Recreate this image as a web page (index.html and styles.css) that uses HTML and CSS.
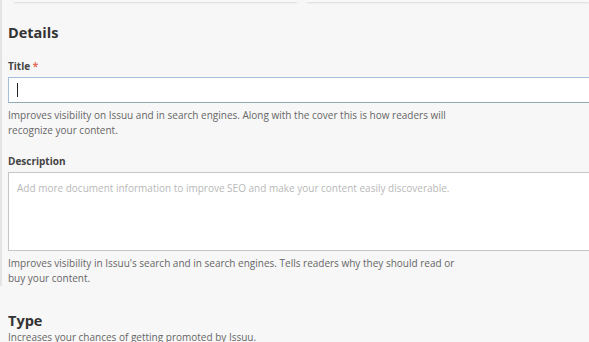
FILE: index.html
```html
<!DOCTYPE html>
<html lang="en">
<head>
  <meta charset="UTF-8">
  <meta name="viewport" content="width=device-width, initial-scale=1.0">
  <title>Details</title>
  <link rel="stylesheet" href="styles.css">
</head>
<body>
  <div class="page">
    <div class="rail"></div>

    <div class="content">
      <!-- Cards above, cut off by the viewport -->
      <div class="cards">
        <div class="card"></div>
        <div class="card"></div>
      </div>

      <!-- Details Section -->
      <section class="details">
        <h2>Details</h2>

        <div class="field">
          <label for="title">Title <span class="required">*</span></label>
          <div class="input focused" id="title"><span class="caret"></span></div>
          <p class="hint">Improves visibility on Issuu and in search engines. Along with the cover this is how readers will recognize your content.</p>
        </div>

        <div class="field">
          <label for="description">Description</label>
          <div class="textarea" id="description">
            <span class="placeholder">Add more document information to improve SEO and make your content easily discoverable.</span>
          </div>
          <p class="hint">Improves visibility in Issuu's search and in search engines. Tells readers why they should read or buy your content.</p>
        </div>
      </section>

      <!-- Type Section -->
      <section class="type">
        <h2>Type</h2>
        <p class="hint">Increases your chances of getting promoted by Issuu.</p>
      </section>
    </div>
  </div>
</body>
</html>
```

FILE: styles.css
```css
/* General Reset */
* {
  margin: 0;
  padding: 0;
  box-sizing: border-box;
  font-family: 'Open Sans', sans-serif;
}

body {
  background: #f7f7f7;
  color: #333;
  overflow: hidden;
}

.page {
  display: flex;
  height: 342px;
}

/* Left edge strip */
.rail {
  width: 2px;
  height: 286px;
  background: #e4e4e4;
  flex-shrink: 0;
}

.content {
  flex: 1;
  padding-left: 6px;
  min-width: 0;
}

/* Cards cut off at top */
.cards {
  display: flex;
  gap: 10px;
  height: 2px;
  margin-left: 6px;
}

.card {
  flex: 1;
  background: #f9f9f9;
  box-shadow: 0 1px 2px rgba(0, 0, 0, 0.12);
}

/* Headings */
h2 {
  font-size: 14.5px;
  font-weight: 700;
  color: #333;
}

.details {
  padding-top: 21px;
}

.details h2 {
  line-height: 20px;
  margin-bottom: 17px;
}

label {
  display: block;
  font-size: 10px;
  font-weight: 700;
  color: #444;
  line-height: 13px;
  margin-bottom: 4px;
}

.required {
  color: #e5695a;
}

/* Inputs */
.input {
  width: 600px;
  height: 26px;
  background: #fff;
  border: 1px solid #c9c9c9;
  padding: 5px 8px;
}

.input.focused {
  border-color: #a3bfdb;
  border-bottom-color: #8eaab4;
}

.caret {
  display: block;
  width: 1px;
  height: 14px;
  background: #222;
}

.textarea {
  width: 600px;
  height: 79px;
  background: #fff;
  border: 1px solid #c6c6c6;
  padding: 9px 8px;
}

.placeholder {
  display: block;
  font-size: 10px;
  line-height: 13px;
  color: #b8b8b8;
}

.hint {
  font-size: 10px;
  color: #666;
  line-height: 14.5px;
  width: 460px;
  margin-top: 5px;
}

.field {
  margin-bottom: 18px;
}

/* Type Section */
.type {
  padding-top: 10px;
}

.type h2 {
  line-height: 15px;
}

.type .hint {
  margin-top: 2px;
  width: auto;
}
```
